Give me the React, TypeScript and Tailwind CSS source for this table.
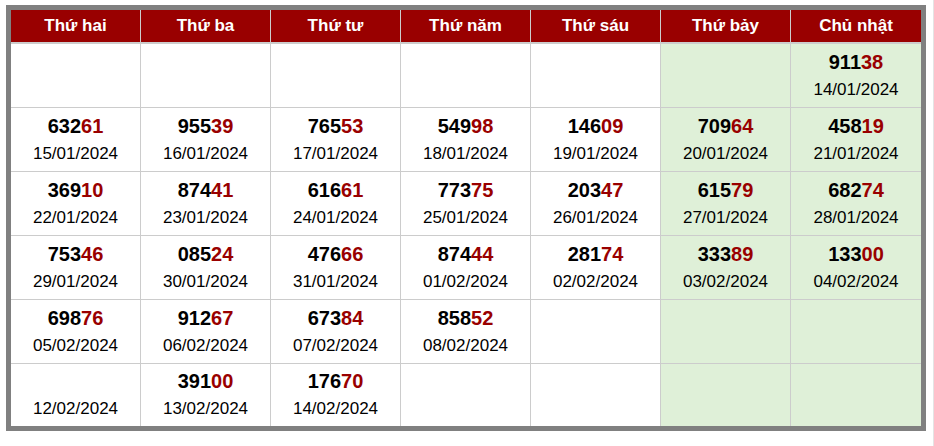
import React from "react";

type Cell = { n?: string; d?: string } | null;

const headers = ["Thứ hai", "Thứ ba", "Thứ tư", "Thứ năm", "Thứ sáu", "Thứ bảy", "Chủ nhật"];

const rows: Cell[][] = [
  [null, null, null, null, null, null, { n: "91138", d: "14/01/2024" }],
  [
    { n: "63261", d: "15/01/2024" },
    { n: "95539", d: "16/01/2024" },
    { n: "76553", d: "17/01/2024" },
    { n: "54998", d: "18/01/2024" },
    { n: "14609", d: "19/01/2024" },
    { n: "70964", d: "20/01/2024" },
    { n: "45819", d: "21/01/2024" },
  ],
  [
    { n: "36910", d: "22/01/2024" },
    { n: "87441", d: "23/01/2024" },
    { n: "61661", d: "24/01/2024" },
    { n: "77375", d: "25/01/2024" },
    { n: "20347", d: "26/01/2024" },
    { n: "61579", d: "27/01/2024" },
    { n: "68274", d: "28/01/2024" },
  ],
  [
    { n: "75346", d: "29/01/2024" },
    { n: "08524", d: "30/01/2024" },
    { n: "47666", d: "31/01/2024" },
    { n: "87444", d: "01/02/2024" },
    { n: "28174", d: "02/02/2024" },
    { n: "33389", d: "03/02/2024" },
    { n: "13300", d: "04/02/2024" },
  ],
  [
    { n: "69876", d: "05/02/2024" },
    { n: "91267", d: "06/02/2024" },
    { n: "67384", d: "07/02/2024" },
    { n: "85852", d: "08/02/2024" },
    null,
    null,
    null,
  ],
  [
    { n: "", d: "12/02/2024" },
    { n: "39100", d: "13/02/2024" },
    { n: "17670", d: "14/02/2024" },
    null,
    null,
    null,
    null,
  ],
];

function CellView({ c, green, last }: { c: Cell; green: boolean; last: boolean }) {
  return (
    <div
      className={`${green ? "bg-[#dff0d8]" : "bg-white"} ${last ? "h-[62px]" : "h-[63px]"} flex flex-col items-center justify-center`}
    >
      {c && (
        <>
          <div className="h-[28px] leading-[28px] text-[20px] font-bold text-black">
            {c.n ? (
              <>
                {c.n.slice(0, 3)}
                <span className="text-[#990000]">{c.n.slice(3)}</span>
              </>
            ) : (
              "\u00a0"
            )}
          </div>
          <div className="h-[28px] leading-[28px] text-[17px] text-black">{c.d}</div>
        </>
      )}
    </div>
  );
}

export default function App() {
  return (
    <div
      className="w-[934px] h-[446px] bg-white border-r border-[#e4e4e4] pl-[6px] pt-[5px]"
      style={{ fontFamily: '"Liberation Sans", Arial, sans-serif' }}
    >
      <div className="w-[920px] border-[5px] border-[#808080] bg-[#cccccc]">
        <div className="grid grid-cols-[129px_129px_129px_129px_129px_129px_130px] gap-x-px">
          {headers.map((h) => (
            <div
              key={h}
              className="h-[32px] bg-[#990000] text-white font-bold text-[17px] flex items-center justify-center"
            >
              {h}
            </div>
          ))}
        </div>
        <div className="h-[2px]" />
        <div className="grid grid-cols-[129px_129px_129px_129px_129px_129px_130px] gap-px">
          {rows.map((r, ri) =>
            r.map((c, ci) => (
              <CellView key={`${ri}-${ci}`} c={c} green={ci >= 5} last={ri === rows.length - 1} />
            ))
          )}
        </div>
      </div>
    </div>
  );
}
